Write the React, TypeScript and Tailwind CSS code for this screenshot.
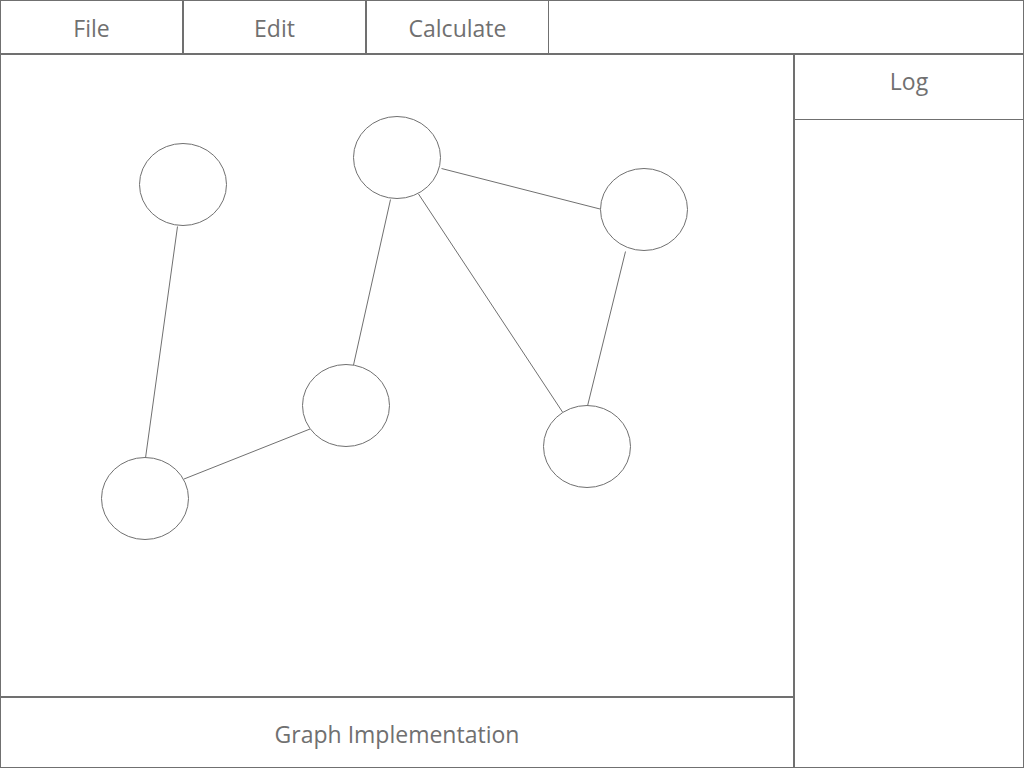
const nodes = [
  { id: "a", x: 183, y: 184.5 },
  { id: "b", x: 397, y: 157.5 },
  { id: "c", x: 644, y: 209.5 },
  { id: "d", x: 346, y: 405.5 },
  { id: "e", x: 587, y: 446.5 },
  { id: "f", x: 145, y: 498.5 },
];

const edges = [
  { id: "a-f", x1: 177.5, y1: 226.5, x2: 145.5, y2: 458 },
  { id: "f-d", x1: 184, y1: 479, x2: 310, y2: 429 },
  { id: "b-d", x1: 390.5, y1: 199.5, x2: 353.5, y2: 365 },
  { id: "b-e", x1: 418.5, y1: 194, x2: 562.5, y2: 412 },
  { id: "b-c", x1: 441.5, y1: 168.5, x2: 600, y2: 209 },
  { id: "c-e", x1: 625.5, y1: 251.5, x2: 587.5, y2: 406 },
];

function MenuBar() {
  return (
    <nav className="flex h-[54px] shrink-0 border-b-2 border-[#707070]">
      <button type="button" className="w-[183px] border-r-2 border-[#707070] pt-0.5">
        File
      </button>
      <button type="button" className="w-[183px] border-r-2 border-[#707070] pt-0.5">
        Edit
      </button>
      <button type="button" className="w-[182px] border-r border-[#707070] pt-0.5">
        Calculate
      </button>
    </nav>
  );
}

function Graph() {
  return (
    <svg
      viewBox="1 55 792 641"
      className="min-h-0 w-full flex-1"
      fill="none"
      stroke="#707070"
      strokeWidth="1"
      role="img"
    >
      {edges.map((e) => (
        <line key={e.id} x1={e.x1} y1={e.y1} x2={e.x2} y2={e.y2} />
      ))}
      {nodes.map((n) => (
        <ellipse key={n.id} cx={n.x} cy={n.y} rx="43.5" ry="41" fill="#fff" />
      ))}
    </svg>
  );
}

export default function App() {
  return (
    <div className="flex h-screen flex-col border border-[#707070] bg-white font-['Open_Sans','Noto_Sans',sans-serif] text-[23px] leading-8 text-[#707070]">
      <MenuBar />
      <div className="flex min-h-0 flex-1">
        <main className="flex min-w-0 flex-1 flex-col">
          <Graph />
          <footer className="flex h-[71px] shrink-0 items-center justify-center border-t-2 border-[#707070] pt-0.5">
            <h1>Graph Implementation</h1>
          </footer>
        </main>
        <aside className="w-[230px] shrink-0 border-l-2 border-[#707070]">
          <h2 className="h-[65px] border-b border-[#707070] pt-2.5 text-center">Log</h2>
        </aside>
      </div>
    </div>
  );
}
